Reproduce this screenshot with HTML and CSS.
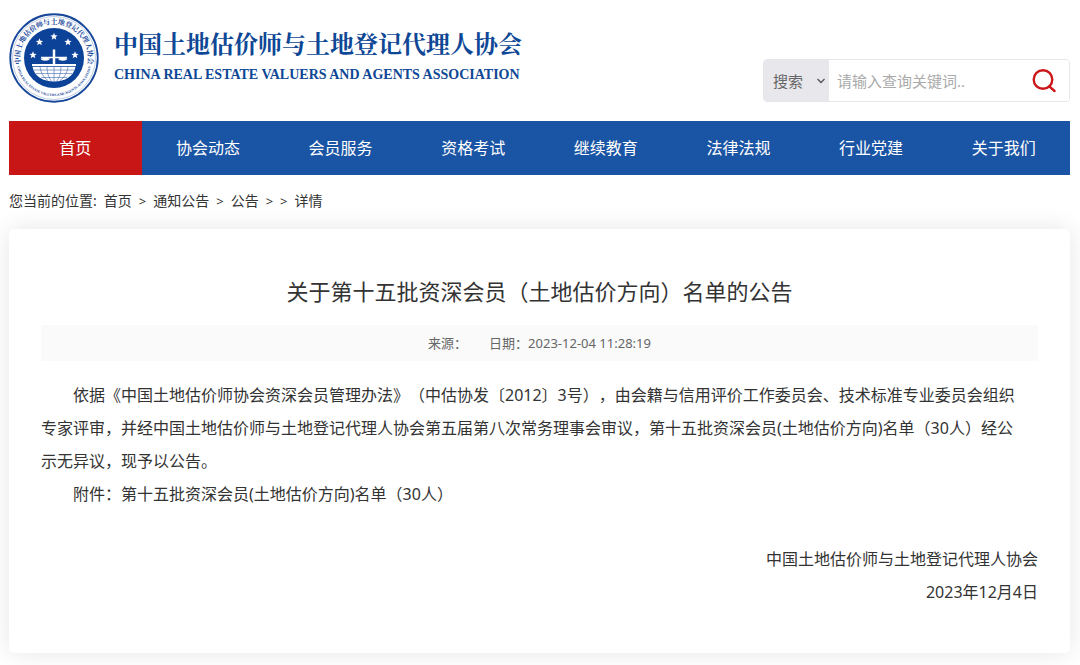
FILE: index.html
```html
<!DOCTYPE html>
<html lang="zh-CN">
<head>
<meta charset="utf-8">
<meta name="viewport" content="width=device-width, initial-scale=1">
<title>关于第十五批资深会员（土地估价方向）名单的公告</title>
<link rel="stylesheet" href="styles.css">
</head>
<body>
<div class="page">
  <header class="header">
    <a class="brand" href="#">
      <svg class="emblem" viewBox="0 0 180 180" aria-hidden="true">
        <defs>
          <path id="ring-top" d="M24 106.500A68 68 0 1 1 156 106.500"/>
          <path id="ring-bottom" d="M14 90A76 76 0 0 0 166 90"/>
          <path id="star" d="M0-7.600 2-2.400 7.400-2.200 3.200 1.200 4.600 6.400 0 3.400-4.600 6.400-3.200 1.200-7.400-2.200-2-2.400Z"/>
        </defs>
        <circle cx="90" cy="90" r="87.500" fill="#fff" stroke="#16479a" stroke-width="3.600"/>
        <circle cx="90" cy="90" r="83" fill="none" stroke="#7f9bca" stroke-width="1"/>
        <circle cx="90" cy="90" r="60" fill="#0c4297"/>
        <g fill="#fff">
          <use href="#star" x="90" y="47"/>
          <use href="#star" x="61" y="58"/>
          <use href="#star" x="118" y="58"/>
          <use href="#star" x="48" y="84"/>
          <use href="#star" x="132" y="84"/>
          <path d="M87.500 73h5v14.500H116v3h-5l6 1c-2 5-17 5-19 0l5-1H92.500V102h-5V90.500H77l5 1c-2 5-17 5-19 0l6-1h-5v-3h23.500Z"/>
          <path d="M46 102h88v4H46Z"/>
          <path d="M47 107.500h86C129 127 112 137 90 137S51 127 47 107.500Z"/>
        </g>
        <path d="M50 114h80M54 121h72M64 129h52M90 107v30M76 107q0 18 9 30M104 107q0 18-9 30M62 107q2 19 16 28M118 107q-2 19-16 28" fill="none" stroke="#4f74b5" stroke-width="1.300"/>
        <text class="ring-cn"><textPath href="#ring-top" startOffset="50%">中国土地估价师与土地登记代理人协会</textPath></text>
        <text class="ring-en"><textPath href="#ring-bottom" startOffset="50%">CHINA REAL ESTATE VALUERS AND AGENTS ASSOCIATION</textPath></text>
      </svg>
      <span class="brand-names">
        <span class="brand-cn">中国土地估价师与土地登记代理人协会</span>
        <span class="brand-en">CHINA REAL ESTATE VALUERS AND AGENTS ASSOCIATION</span>
      </span>
    </a>
    <form class="search" role="search">
      <span class="search-type">
        <select aria-label="搜索类型"><option>搜索</option></select>
        <svg class="chevron" viewBox="0 0 8 6" aria-hidden="true"><path d="M.5 1 4 4.500 7.500 1"/></svg>
      </span>
      <input class="search-input" type="text" aria-label="查询关键词" placeholder="请输入查询关键词..">
      <button class="search-button" type="submit" aria-label="搜索">
        <svg viewBox="0 0 24 24" aria-hidden="true"><circle cx="11" cy="10.500" r="9.300"/><path d="M17.300 17.300 22.500 22"/></svg>
      </button>
    </form>
  </header>

  <nav class="nav">
    <a class="nav-item active" href="#">首页</a>
    <a class="nav-item" href="#">协会动态</a>
    <a class="nav-item" href="#">会员服务</a>
    <a class="nav-item" href="#">资格考试</a>
    <a class="nav-item" href="#">继续教育</a>
    <a class="nav-item" href="#">法律法规</a>
    <a class="nav-item" href="#">行业党建</a>
    <a class="nav-item" href="#">关于我们</a>
  </nav>

  <div class="crumbs">
    <span>您当前的位置:</span>
    <a href="#">首页</a>
    <span class="sep">&gt;</span>
    <a href="#">通知公告</a>
    <span class="sep">&gt;</span>
    <a href="#">公告</a>
    <span class="sep">&gt;</span>
    <span class="sep">&gt;</span>
    <span>详情</span>
  </div>

  <main class="card">
    <h1 class="title">关于第十五批资深会员（土地估价方向）名单的公告</h1>
    <div class="meta"><span>来源：</span><span>日期：2023-12-04 11:28:19</span></div>
    <article class="article">
      <p>依据《中国土地估价师协会资深会员管理办法》（中估协发〔2012〕3号），由会籍与信用评价工作委员会、技术标准专业委员会组织<br>专家评审，并经中国土地估价师与土地登记代理人协会第五届第八次常务理事会审议，第十五批资深会员(土地估价方向)名单（30人）经公<br>示无异议，现予以公告。</p>
      <p>附件：第十五批资深会员(土地估价方向)名单（30人）</p>
      <div class="signature">
        <p>中国土地估价师与土地登记代理人协会</p>
        <p>2023年12月4日</p>
      </div>
    </article>
  </main>
</div>
</body>
</html>
```
FILE: styles.css
```css
* { box-sizing: border-box; }

body {
  margin: 0;
  background: #fff;
  color: #333;
  font-family: "Noto Sans", "Noto Sans CJK SC", sans-serif;
  font-size: 16px;
  text-spacing-trim: space-all;
}

a { color: inherit; text-decoration: none; }
p { margin: 0; }

.page { padding: 0 10px 12px 9px; }

.header {
  display: flex;
  justify-content: space-between;
  align-items: flex-start;
  height: 121px;
  padding-top: 13px;
}

.brand {
  display: flex;
  gap: 15px;
  color: #0d4795;
}
.emblem { width: 90px; height: 90px; }
.ring-cn {
  fill: #16479a;
  font: 700 14px "Noto Serif CJK SC", "Noto Sans CJK SC", serif;
  text-anchor: middle;
}
.ring-en {
  fill: #16479a;
  font: 700 7px "Liberation Serif", serif;
  text-anchor: middle;
}
.brand-names {
  display: flex;
  flex-direction: column;
  gap: 5px;
  padding-top: 13px;
  white-space: nowrap;
}
.brand-cn {
  font-family: "Noto Serif CJK SC", "Noto Sans CJK SC", serif;
  font-size: 24px;
  font-weight: 700;
  line-height: 34px;
}
.brand-en {
  font-family: "Liberation Serif", serif;
  font-size: 14px;
  font-weight: 700;
  line-height: 20px;
}

.search {
  display: flex;
  width: 307px;
  height: 43px;
  margin-top: 46px;
  border: 1px solid #e6e6ea;
  border-radius: 4px;
  overflow: hidden;
}
.search-type {
  position: relative;
  display: flex;
  width: 65px;
  background: #e8e7ec;
}
.search-type select {
  width: 100%;
  padding: 0 9px;
  border: 0;
  background: transparent;
  appearance: none;
  color: #666;
  font-family: inherit;
  font-size: 15px;
}
.chevron {
  position: absolute;
  top: 18px;
  right: 4px;
  width: 8px;
  height: 6px;
  fill: none;
  stroke: #555;
  stroke-width: 1.3;
  pointer-events: none;
}
.search-input {
  flex: 1;
  min-width: 0;
  padding: 0 8px;
  border: 0;
  outline: 0;
  font-family: inherit;
  font-size: 15px;
}
.search-input::placeholder { color: #aaa; }
.search-button {
  width: 50px;
  padding: 0 13px;
  border: 0;
  background: #fff;
}
.search-button svg {
  display: block;
  width: 24px;
  height: 24px;
  fill: none;
  stroke: #cc1618;
  stroke-width: 2.4;
  stroke-linecap: round;
}

.nav {
  display: grid;
  grid-template-columns: repeat(8, 1fr);
  background: #1a54a4;
}
.nav-item {
  color: #fff;
  line-height: 54px;
  text-align: center;
}
.nav-item.active { background: #c81616; }

.crumbs {
  display: flex;
  gap: 7px;
  padding: 14px 0 16px;
  font-size: 14px;
  line-height: 24px;
}
.sep { font-size: 13px; }

.card {
  padding: 45px 32px 44px;
  border-radius: 5px;
  background: #fff;
  box-shadow: 0 0 24px rgba(0, 0, 0, .1);
}
.title {
  margin: 0 0 17px;
  font-size: 22px;
  font-weight: 400;
  line-height: 34px;
  text-align: center;
}
.meta {
  display: flex;
  justify-content: center;
  gap: 22px;
  background: #fafafa;
  color: #666;
  font-size: 13px;
  line-height: 36px;
}
.article {
  padding-top: 18px;
  line-height: 33px;
}
.article > p { text-indent: 2em; }
.signature {
  padding-top: 32px;
  text-align: right;
}
```
